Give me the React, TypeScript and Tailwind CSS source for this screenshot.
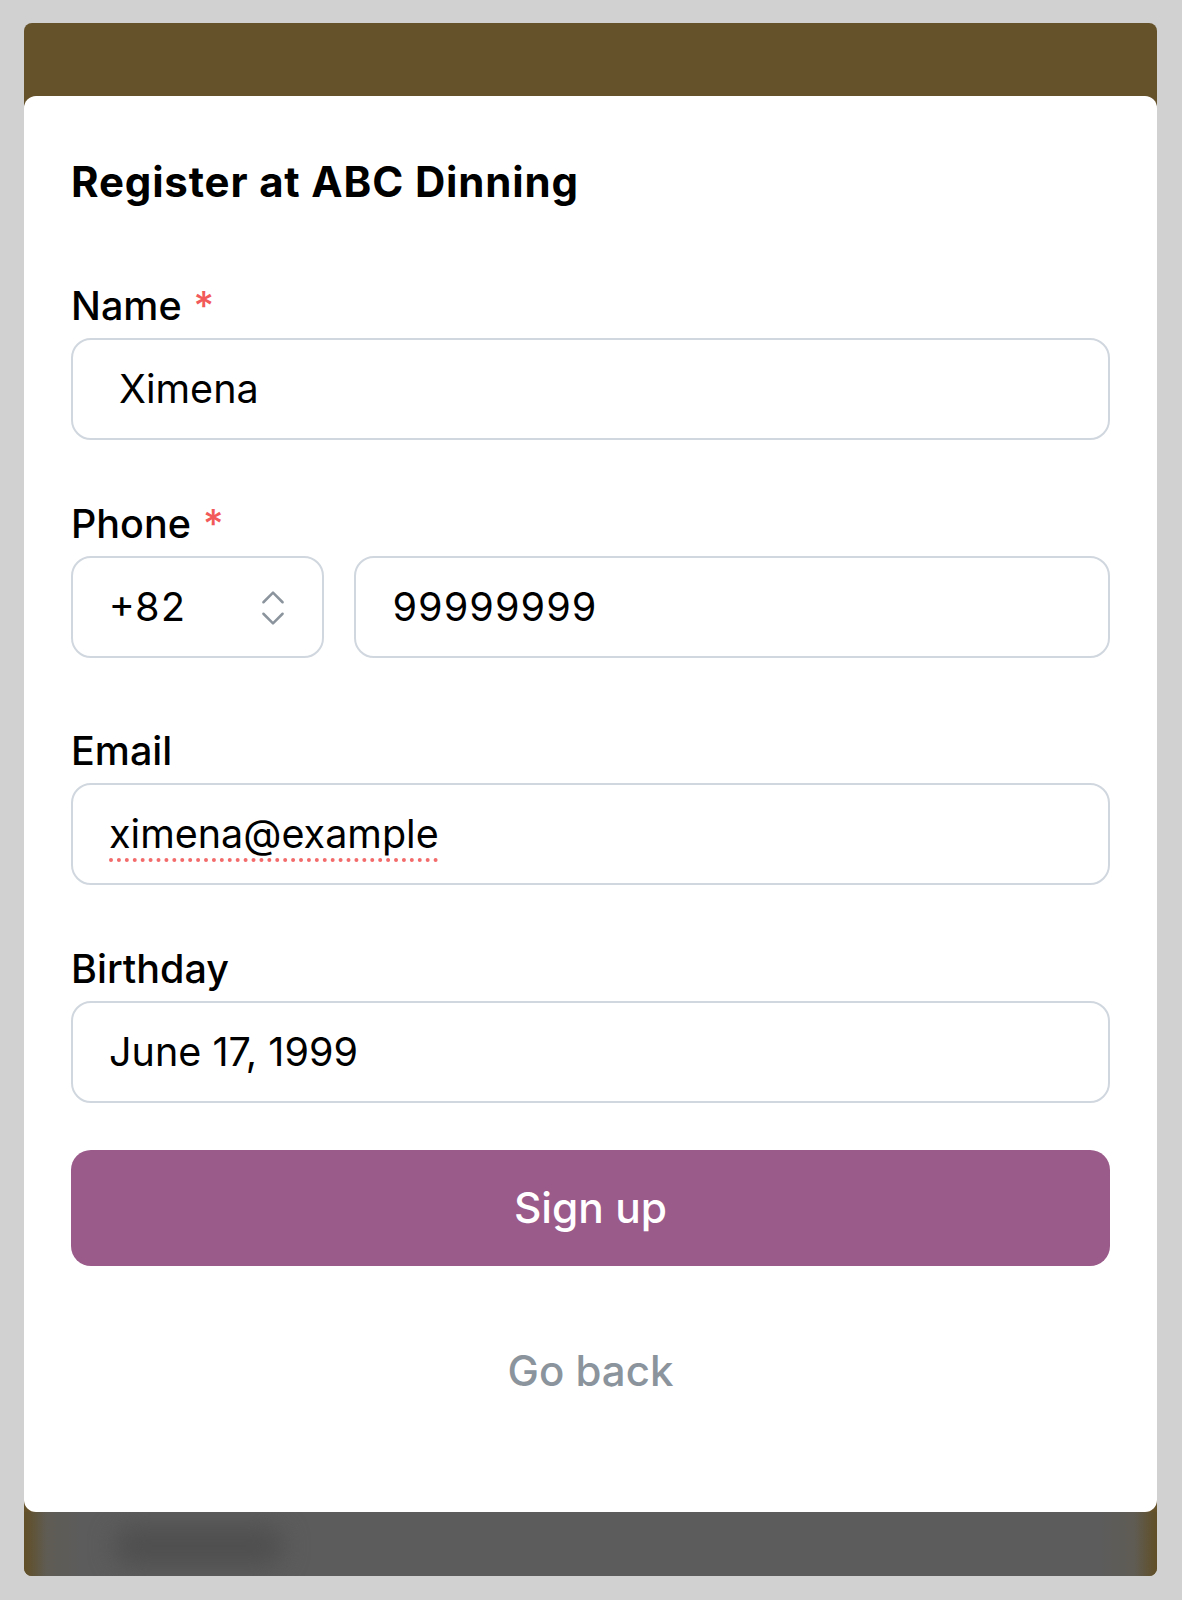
import { ChevronsUpDown } from "lucide-react";

function Label({ text, required }: { text: string; required?: boolean }) {
  return (
    <div className="h-[44px] text-[39.5px] leading-[44px] font-medium text-black">
      {text}
      {required && <span className="ml-[12px] text-[#f25a5a]">*</span>}
    </div>
  );
}

function Field({ children, className = "" }: { children: React.ReactNode; className?: string }) {
  return (
    <div
      className={
        "h-[102px] rounded-[20px] border-2 border-[#d1d7de] bg-white flex items-center pt-[2px] text-[39.5px] text-black " +
        className
      }
    >
      {children}
    </div>
  );
}

export default function App() {
  return (
    <div className="min-h-screen bg-[#d1d1d1] pt-[23px] pl-[24px] pr-[25px] pb-[24px] font-['Inter',sans-serif]">
      <div className="rounded-[8px] bg-[#65512a] overflow-hidden flex flex-col">
        <div className="h-[73px]" />

        {/* sheet */}
        <div className="h-[1416px] bg-white rounded-[12px] px-[47px] pt-[62px] flex flex-col">
          <h1 className="h-[48px] text-[42px] leading-[48px] font-bold tracking-[0.02em] text-black">
            Register at ABC Dinning
          </h1>

          <div className="mt-[78px] flex flex-col gap-[10px]">
            <Label text="Name" required />
            <Field className="pl-[46px]">Ximena</Field>
          </div>

          <div className="mt-[62px] flex flex-col gap-[10px]">
            <Label text="Phone" required />
            <div className="flex gap-[30px]">
              <Field className="w-[253px] shrink-0 pl-[36px] pr-[26px] justify-between">
                <span className="tabular-nums">+82</span>
                <ChevronsUpDown className="w-[46px] h-[46px] text-[#8b949c]" strokeWidth={1.3} />
              </Field>
              <Field className="flex-1 pl-[36px] tabular-nums">99999999</Field>
            </div>
          </div>

          <div className="mt-[71px] flex flex-col gap-[10px]">
            <Label text="Email" />
            <Field className="pl-[36px]">
              <span className="underline decoration-dotted decoration-[#f36b6b] decoration-[4px] underline-offset-[10px]">
                ximena@example
              </span>
            </Field>
          </div>

          <div className="mt-[62px] flex flex-col gap-[10px]">
            <Label text="Birthday" />
            <Field className="pl-[36px]">June 17, 1999</Field>
          </div>

          <button className="mt-[47px] h-[116px] rounded-[20px] bg-[#9a5a8a] text-white text-[42.5px] font-medium">
            Sign up
          </button>

          <button className="mt-[83px] h-[44px] text-[42px] leading-[44px] font-medium text-[#8b949c]">Go back</button>
        </div>

        {/* blurred bar behind the sheet */}
        <div className="relative h-[64px] overflow-hidden bg-[linear-gradient(to_right,#614f26_0%,#5f5c54_2%,#5c5c5c_5%,#5c5c5c_95%,#5f5c54_98%,#614f26_100%)]">
          <div className="absolute left-[90px] top-[14px] w-[170px] h-[40px] rounded-full bg-[#4f4f4f] blur-[12px]" />
        </div>
      </div>
    </div>
  );
}
